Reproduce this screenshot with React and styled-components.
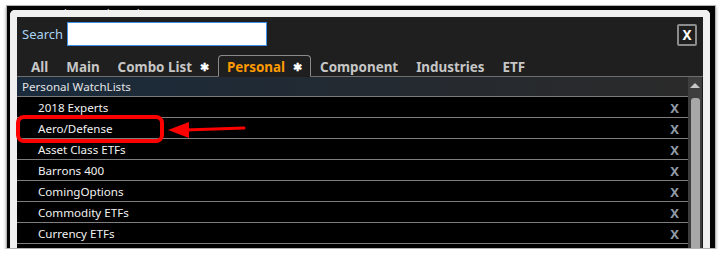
import styled, { createGlobalStyle } from 'styled-components'

const GlobalStyle = createGlobalStyle`
  body {
    margin: 0;
    background: #ffffff;
    font-family: 'Noto Sans', 'Open Sans', sans-serif;
  }
`

const TABS = [
  { name: 'All' },
  { name: 'Main' },
  { name: 'Combo List', star: true },
  { name: 'Personal', star: true, active: true },
  { name: 'Component' },
  { name: 'Industries' },
  { name: 'ETF' },
]

const WATCHLISTS = [
  '2018 Experts',
  'Aero/Defense',
  'Asset Class ETFs',
  'Barrons 400',
  'ComingOptions',
  'Commodity ETFs',
  'Currency ETFs',
]

const StyledShot = styled.div`
  position: relative;
  margin: 5px 0 0 6px;
  width: 708px;
  height: 242px;
  border: 1px solid #b4b4b4;
  box-shadow: 0 2px 3px rgba(0, 0, 0, 0.35);
  background: #050505;
  overflow: hidden;
`

const StyledAppMenu = styled.div`
  display: flex;
  justify-content: space-between;
  height: 8px;
  padding: 0 8px 0 50px;
  font-size: 13px;
  line-height: 16px;
  color: #d0d0d0;
  overflow: hidden;
`

const StyledLastUpdate = styled.span`
  color: #f0a030;
`

const StyledDialog = styled.div`
  position: absolute;
  left: 3px;
  top: 4px;
  width: 686px;
  height: 260px;
  border: 7px solid #f0f0f0;
  border-bottom: none;
  border-radius: 5px 5px 0 0;
  background: #1f1f1f;
  display: flex;
  flex-direction: column;
`

const StyledSearchBar = styled.div`
  display: flex;
  align-items: center;
  height: 24px;
  padding: 5px 6px 10px 5px;
`

const StyledSearchLabel = styled.span`
  width: 45px;
  font-size: 13px;
  color: #a9d2f2;
`

const StyledSearchInput = styled.div`
  position: relative;
  width: 198px;
  height: 22px;
  background: #ffffff;
  border: 1px solid #3d8ee6;

  ::before {
    content: '';
    position: absolute;
    left: 2px;
    top: 3px;
    width: 1px;
    height: 15px;
    background: #000000;
  }
`

const StyledCloseButton = styled.div`
  margin-left: auto;
  margin-top: 1px;
  width: 16px;
  height: 18px;
  border: 2px solid #8c8c8c;
  border-radius: 2px;
  display: flex;
  align-items: center;
  justify-content: center;
  font-size: 13.5px;
  font-weight: 700;
  color: #ffffff;
`

const StyledTabs = styled.div`
  display: flex;
  align-items: flex-end;
  height: 20px;
  padding-left: 5px;
  border-bottom: 1px solid #6e6e6e;
`

const StyledTab = styled.div`
  display: flex;
  align-items: center;
  height: 19px;
  padding: 1px 8px 0;
  margin-bottom: -1px;
  font-size: 13.4px;
  font-weight: 700;
  color: ${(props) => (props.$active ? '#ff9a00' : '#c6c6c6')};
  border: 1px solid ${(props) => (props.$active ? '#8a8a8a' : 'transparent')};
  border-bottom: 1px solid ${(props) => (props.$active ? '#1f1f1f' : 'transparent')};
  border-radius: 4px 4px 0 0;
`

const StyledStar = styled.span`
  margin-left: 8px;
  font-size: 11px;
  color: #ffffff;
`

const StyledListArea = styled.div`
  display: flex;
  flex: 1;
`

const StyledList = styled.div`
  flex: 1;
  display: flex;
  flex-direction: column;
  background: #000000;
`

const StyledListHeader = styled.div`
  height: 19px;
  display: flex;
  align-items: center;
  padding-left: 5px;
  font-size: 11.6px;
  color: #e4e4e4;
  background: linear-gradient(90deg, #1a2b3c 0%, #252a30 60%, #2a2a2a 100%);
  border-bottom: 1px solid #7a7a7a;
`

const StyledRow = styled.div`
  height: 20px;
  display: flex;
  align-items: center;
  padding: 1px 9px 0 21px;
  box-sizing: border-box;
  height: 21px;
  border-bottom: 1px solid #7e7e7e;
  font-size: 11.6px;
  color: #f2f2f2;
`

const StyledRemove = styled.span`
  margin-left: auto;
  font-size: 13px;
  font-weight: 700;
  color: #8e9aa6;
`

const StyledScrollbar = styled.div`
  width: 14px;
  display: flex;
  flex-direction: column;
  align-items: center;
  background: #3e3e3e;
  border-right: 1px solid #1a1a1a;
`

const StyledArrowUp = styled.div`
  margin-top: 6px;
  width: 0;
  height: 0;
  border-left: 5px solid transparent;
  border-right: 5px solid transparent;
  border-bottom: 5px solid #c8c8c8;
`

const StyledThumb = styled.div`
  margin-top: 10px;
  flex: 1;
  width: 9px;
  background: #a8a8a8;
  border-radius: 3px 3px 0 0;
`

const StyledCallout = styled.svg`
  position: absolute;
  left: 0;
  top: 0;
  pointer-events: none;
`

const App = () => {
  return (
    <>
      <GlobalStyle />
      <StyledShot>
        <StyledAppMenu>
          <span>Flex Tools Help</span>
          <StyledLastUpdate>Last U(</StyledLastUpdate>
        </StyledAppMenu>
        <StyledDialog>
          <StyledSearchBar>
            <StyledSearchLabel>Search</StyledSearchLabel>
            <StyledSearchInput />
            <StyledCloseButton>X</StyledCloseButton>
          </StyledSearchBar>
          <StyledTabs>
            {TABS.map((tab) => (
              <StyledTab key={tab.name} $active={tab.active}>
                {tab.name}
                {tab.star && <StyledStar>✱</StyledStar>}
              </StyledTab>
            ))}
          </StyledTabs>
          <StyledListArea>
            <StyledList>
              <StyledListHeader>Personal WatchLists</StyledListHeader>
              {WATCHLISTS.map((name) => (
                <StyledRow key={name}>
                  {name}
                  <StyledRemove>X</StyledRemove>
                </StyledRow>
              ))}
            </StyledList>
            <StyledScrollbar>
              <StyledArrowUp />
              <StyledThumb />
            </StyledScrollbar>
          </StyledListArea>
        </StyledDialog>
        <StyledCallout width='708' height='242'>
          <rect x='11' y='111' width='144' height='24' rx='6' fill='none' stroke='#ff0000' strokeWidth='4' />
          <line x1='178' y1='124' x2='237' y2='122' stroke='#ff0000' strokeWidth='3' strokeLinecap='round' />
          <polygon points='161,124 182,116 182,132' fill='#ff0000' />
        </StyledCallout>
      </StyledShot>
    </>
  )
}

export default App
